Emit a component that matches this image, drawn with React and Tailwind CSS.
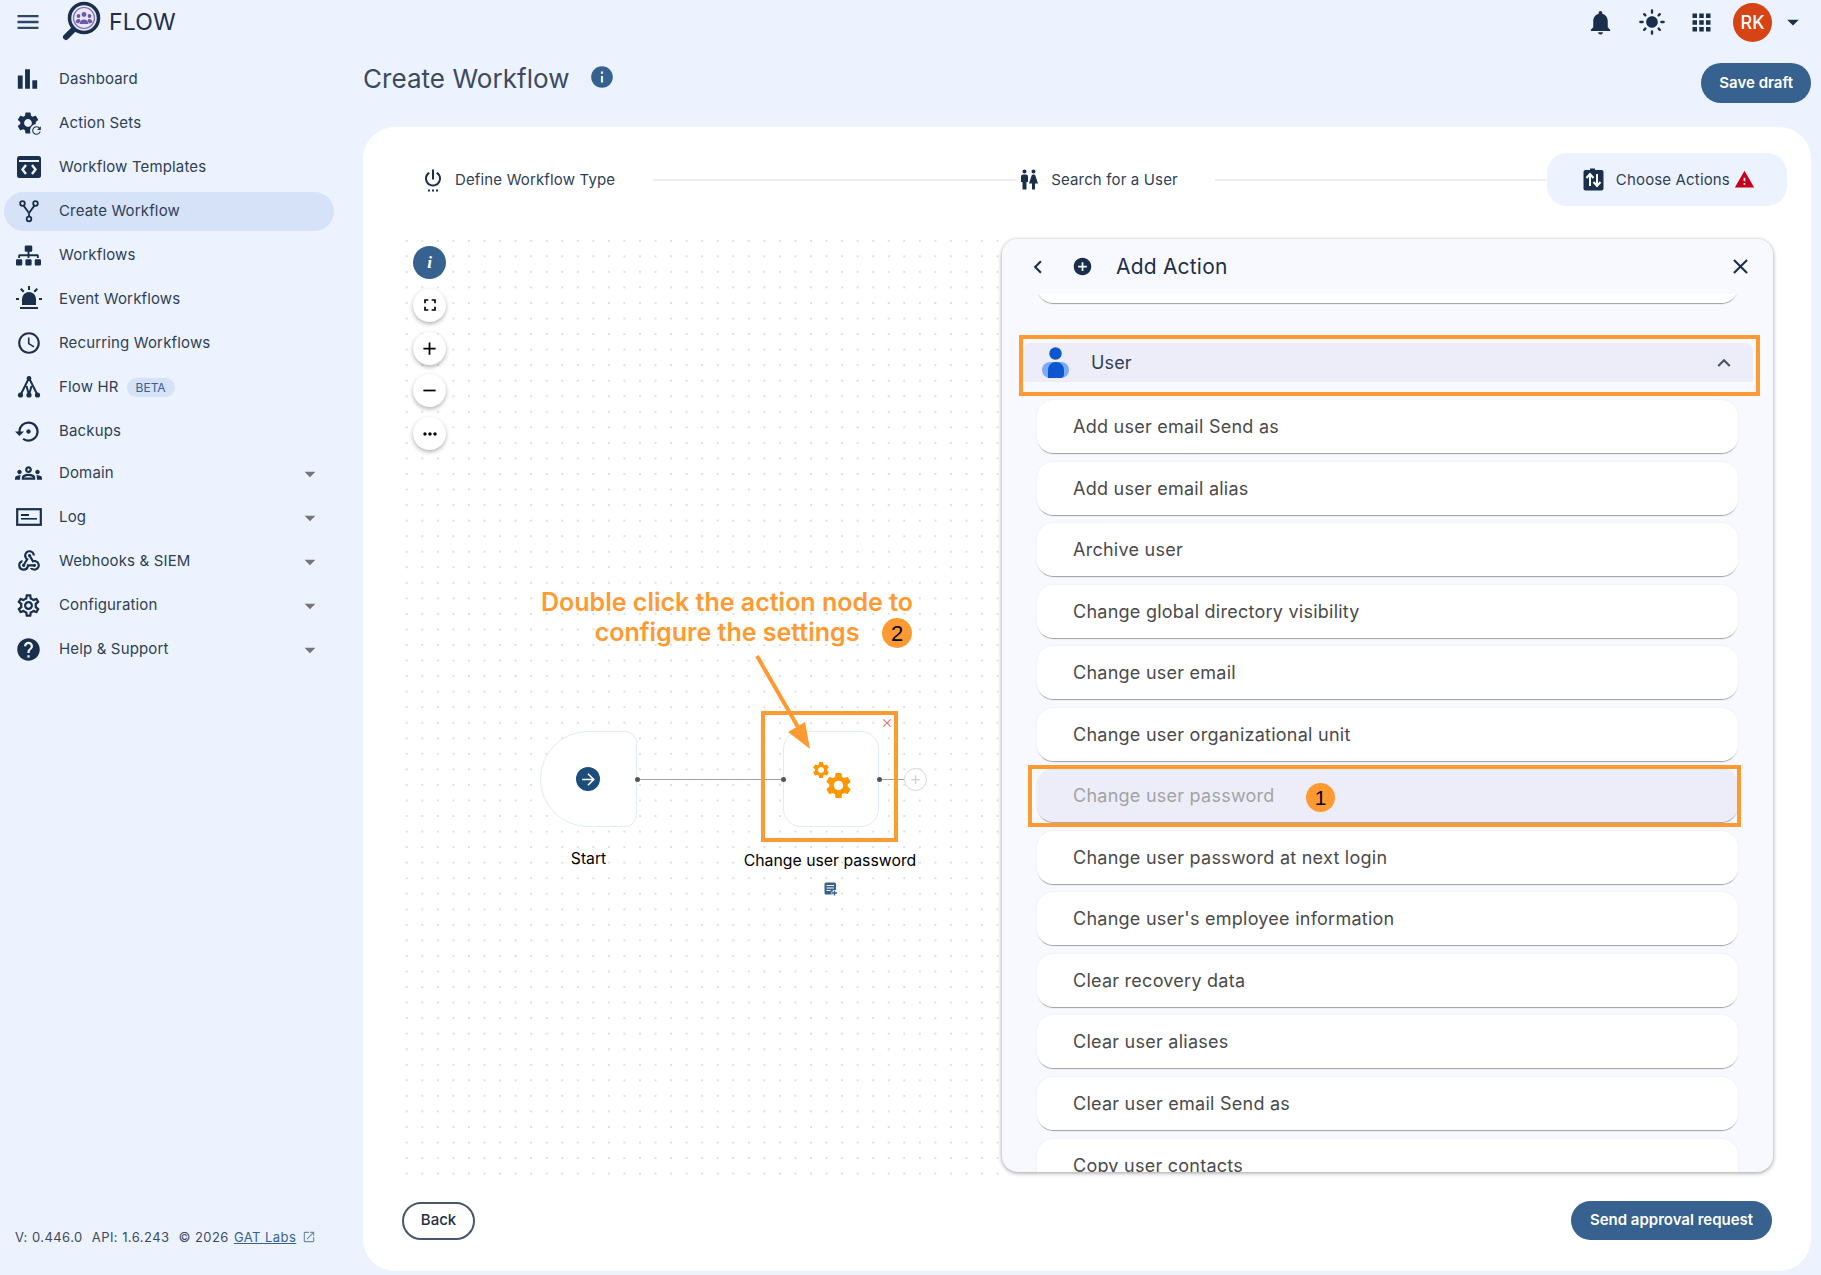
import {
  MdMenu, MdBarChart, MdSettings, MdRefresh, MdAccessTime, MdSettingsBackupRestore, MdOutlineGroups, MdOutlineWebhook,
  MdOutlineSettings, MdHelp, MdNotifications, MdLightMode, MdApps, MdArrowDropDown, MdSettingsPower, MdWc, MdWarning,
  MdInfo, MdFullscreen, MdAdd, MdRemove, MdMoreHoriz, MdChevronLeft, MdAddCircle, MdClose, MdExpandLess, MdArrowForward, MdOpenInNew,
} from 'react-icons/md'
import { FaSitemap } from 'react-icons/fa'

const INK = '#1a2f4b'

// ─── Hand drawn icons ─────────────────────────────────────────────
function Logo() {
  return (
    <svg width="40" height="42" viewBox="0 0 40 42" className="shrink-0">
      <path d="M14 27 L5 36" stroke={INK} strokeWidth="6" strokeLinecap="round" />
      <circle cx="23" cy="17" r="14.5" fill="#e9e7f6" stroke={INK} strokeWidth="3.5" />
      <circle cx="23" cy="17" r="10.5" fill="none" stroke="#7a6bb5" strokeWidth="1.2" />
      <circle cx="23" cy="13.5" r="2.4" fill="#6b5aa6" />
      <circle cx="17.5" cy="15" r="1.9" fill="#6b5aa6" />
      <circle cx="28.5" cy="15" r="1.9" fill="#6b5aa6" />
      <path d="M18.5 23 a4.5 4.5 0 0 1 9 0 z" fill="#6b5aa6" />
      <path d="M14.5 21.5 a3.5 3.5 0 0 1 4 -3.5 l1 2 -2 2.5 z M31.5 21.5 a3.5 3.5 0 0 0 -4 -3.5 l-1 2 2 2.5 z" fill="#6b5aa6" />
    </svg>
  )
}

function ActionSetsIcon() {
  return (
    <span className="relative block h-[26px] w-[26px]">
      <MdSettings size={26} color={INK} className="-ml-[1px]" />
      <span className="absolute -bottom-[1px] -right-[1px] flex h-[13px] w-[13px] items-center justify-center rounded-full bg-[#ecf3fe]">
        <MdRefresh size={13} color={INK} />
      </span>
    </span>
  )
}

function TemplatesIcon() {
  return (
    <svg width="26" height="24" viewBox="0 0 26 24">
      <rect x="1" y="1" width="24" height="22" rx="2.5" fill={INK} />
      <rect x="3" y="5" width="20" height="2" fill="#ecf3fe" />
      <path d="M10 10 L6.5 14.5 L10 19 M16 10 L19.5 14.5 L16 19" fill="none" stroke="#ecf3fe" strokeWidth="2.4" />
    </svg>
  )
}

function ForkIcon() {
  return (
    <svg width="24" height="24" viewBox="0 0 24 24" fill="none" stroke={INK} strokeWidth="1.8">
      <circle cx="5.5" cy="4.5" r="2.3" />
      <circle cx="18.5" cy="4.5" r="2.3" />
      <circle cx="12" cy="20" r="2.3" />
      <path d="M6.6 6.6 L12 14 L17.4 6.6 M12 14 V17.7" />
    </svg>
  )
}

function SirenIcon() {
  return (
    <svg width="26" height="26" viewBox="0 0 26 26" fill={INK}>
      <path d="M6 19 v-6 a7 7 0 0 1 14 0 v6 z" />
      <rect x="4" y="21" width="18" height="2" />
      <rect x="12" y="0" width="2" height="4" />
      <path d="M4 3.5 l1.5 -1.5 3 3 -1.5 1.5 z M22 3.5 l-1.5 -1.5 -3 3 1.5 1.5 z" />
      <rect x="0" y="12" width="3" height="2" />
      <rect x="23" y="12" width="3" height="2" />
    </svg>
  )
}

function FlowHrIcon() {
  return (
    <svg width="24" height="24" viewBox="0 0 24 24" fill={INK} stroke={INK}>
      <path d="M12 3 L3.5 20 M12 3 L20.5 20 M9.5 11 L12 20 M14.5 11 L12 20" fill="none" strokeWidth="2" />
      <circle cx="12" cy="3.5" r="2.4" strokeWidth="0" />
      <circle cx="3.5" cy="20" r="2.6" strokeWidth="0" />
      <circle cx="12" cy="20" r="2.6" strokeWidth="0" />
      <circle cx="20.5" cy="20" r="2.6" strokeWidth="0" />
    </svg>
  )
}

function LogIcon() {
  return (
    <svg width="26" height="18" viewBox="0 0 26 18">
      <rect x="1.2" y="1.2" width="23.6" height="15.6" fill="none" stroke={INK} strokeWidth="2.2" />
      <rect x="5" y="6" width="8" height="2" fill={INK} />
      <rect x="5" y="10" width="16" height="1.6" fill={INK} />
    </svg>
  )
}

function ChooseActionsIcon() {
  return (
    <svg width="21" height="23" viewBox="0 0 21 23">
      <rect x="0.5" y="2" width="20" height="20.5" rx="2" fill={INK} />
      <rect x="7" y="0.5" width="5" height="3" fill={INK} />
      <path d="M7 18 V7 M3.5 10 L7 6 L10.5 10" fill="none" stroke="#fff" strokeWidth="2" />
      <path d="M14 6 V17 M10.5 14 L14 18 L17.5 14" fill="none" stroke="#fff" strokeWidth="2" />
    </svg>
  )
}

function UserIcon() {
  return (
    <svg width="27" height="31" viewBox="0 0 27 31">
      <circle cx="13.5" cy="6.5" r="6.2" fill="#0b57d0" />
      <rect x="0" y="15" width="27" height="16" rx="8" fill="#7baaf7" />
      <path d="M6 31 V23 a8 8 0 0 1 8 -8 a8 8 0 0 1 8 8 V27 a4 4 0 0 1 -4 4 z" fill="#0b57d0" />
    </svg>
  )
}

function NoteAddIcon() {
  return (
    <svg width="14" height="14" viewBox="0 0 14 14">
      <rect x="0.5" y="0.5" width="11.5" height="12" rx="1.5" fill="#37618e" />
      <path d="M2.5 3.5 H10 M2.5 6 H10 M2.5 8.5 H6.5" stroke="#fff" strokeWidth="1" />
      <path d="M10.5 8 V14 M7.5 11 H13.5" stroke="#fff" strokeWidth="3.2" />
      <path d="M10.5 8.5 V13.5 M8 11 H13" stroke="#37618e" strokeWidth="1.4" />
    </svg>
  )
}

// ─── Data ─────────────────────────────────────────────────────────
const NAV = [
  { label: 'Dashboard', icon: <MdBarChart size={30} color={INK} className="-ml-[2px]" /> },
  { label: 'Action Sets', icon: <ActionSetsIcon /> },
  { label: 'Workflow Templates', icon: <TemplatesIcon /> },
  { label: 'Create Workflow', icon: <ForkIcon />, active: true },
  { label: 'Workflows', icon: <FaSitemap size={25} color={INK} /> },
  { label: 'Event Workflows', icon: <SirenIcon /> },
  { label: 'Recurring Workflows', icon: <MdAccessTime size={26} color={INK} /> },
  { label: 'Flow HR', icon: <FlowHrIcon />, beta: true },
  { label: 'Backups', icon: <MdSettingsBackupRestore size={27} color={INK} /> },
  { label: 'Domain', icon: <MdOutlineGroups size={30} color={INK} />, caret: true, up: true },
  { label: 'Log', icon: <LogIcon />, caret: true },
  { label: 'Webhooks & SIEM', icon: <MdOutlineWebhook size={26} color={INK} />, caret: true },
  { label: 'Configuration', icon: <MdOutlineSettings size={27} color={INK} />, caret: true },
  { label: 'Help & Support', icon: <MdHelp size={27} color={INK} />, caret: true },
]

const ACTIONS = [
  'Add user email Send as',
  'Add user email alias',
  'Archive user',
  'Change global directory visibility',
  'Change user email',
  'Change user organizational unit',
  'Change user password',
  'Change user password at next login',
  "Change user's employee information",
  'Clear recovery data',
  'Clear user aliases',
  'Clear user email Send as',
  'Copy user contacts',
]

const CARD = 'flex h-[53px] shrink-0 items-center rounded-2xl pl-[36px] text-[18px] tracking-[0.25px] shadow-[0_2px_1px_-1px_rgba(0,0,0,0.35),0_0_2px_rgba(0,0,0,0.08)]'
const FLOAT_BTN = 'flex h-[33px] w-[33px] items-center justify-center rounded-full bg-white text-black shadow-[0_2px_4px_rgba(0,0,0,0.3)]'

// ─── Sidebar ──────────────────────────────────────────────────────
function NavRow({ item }) {
  return (
    <div
      className={`ml-1 mr-[29px] my-[2.5px] flex h-[39px] items-center rounded-full pl-[11px] pr-[10px] ${item.active ? 'bg-[#d6e2f8]' : ''} ${item.up ? 'mt-[0.5px]' : ''}`}
    >
      <span className="flex w-[27px] shrink-0 items-center justify-center">{item.icon}</span>
      <span className="ml-[17px] text-[15px] tracking-[0.15px] text-[#2f3f55]">{item.label}</span>
      {item.beta && (
        <span className="ml-2 rounded-full bg-[#d6e2f8] px-[9px] py-[2px] text-[12px] leading-[15px] text-[#37618e]">BETA</span>
      )}
      {item.caret && <MdArrowDropDown size={26} color="#757575" className="ml-auto mr-[1px] mt-[2px]" />}
    </div>
  )
}

function Sidebar() {
  return (
    <aside className="flex w-[363px] shrink-0 flex-col pb-[28px] pt-[13px]">
      {NAV.map((item) => <NavRow key={item.label} item={item} />)}
      <div className="mt-auto flex items-center pl-[15px] text-[13px] tracking-[0.45px] text-[#3c4a5e]">
        <span>V: 0.446.0</span>
        <span className="ml-[9px]">API: 1.6.243</span>
        <span className="ml-[9px]">© 2026</span>
        <span className="ml-[5px] text-[#37618e] underline">GAT Labs</span>
        <MdOpenInNew size={14} color="#6d8db0" className="ml-[6px]" />
      </div>
    </aside>
  )
}

// ─── Canvas with the two nodes ────────────────────────────────────
function Canvas() {
  return (
    <div className="relative -mb-[3px] flex-1 bg-[radial-gradient(#c6c6c6_0.6px,transparent_0.8px)] bg-[size:15.55px_15.55px] bg-[position:-1px_-6px]">
      <div className="absolute left-[13px] top-[7px] flex flex-col gap-[9.8px]">
        <span className="flex h-[33px] w-[33px] items-center justify-center rounded-full bg-[#37618e] font-['Liberation_Serif',serif] text-[17px] font-bold italic text-white">i</span>
        <span className={FLOAT_BTN}><MdFullscreen size={20} /></span>
        <span className={FLOAT_BTN}><MdAdd size={21} /></span>
        <span className={FLOAT_BTN}><MdRemove size={21} /></span>
        <span className={FLOAT_BTN}><MdMoreHoriz size={20} /></span>
      </div>

      <div className="absolute left-[97px] top-[348px] w-[460px] text-center text-[25px] font-semibold leading-[30px] text-[#ff9a33]">
        Double click the action node to<br />configure the settings
      </div>
      <span className="absolute left-[482px] top-[379px] flex h-[30px] w-[30px] items-center justify-center rounded-full bg-[#ff9a33] font-['Liberation_Sans',sans-serif] text-[22px] text-black">2</span>

      {/* start node */}
      <div className="absolute left-[140px] top-[492px] flex h-[96px] w-[97px] items-center justify-center rounded-l-[48px] rounded-r-[12px] border border-[#e2eaf8] bg-white pr-[1px]">
        <span className="flex h-6 w-6 items-center justify-center rounded-full bg-[#1c4d7c]"><MdArrowForward size={19} color="#fff" /></span>
      </div>
      <span className="absolute left-[140px] top-[608px] w-[97px] text-center text-[15.7px] text-black">Start</span>

      {/* connectors */}
      <div className="absolute left-[237px] top-[540px] h-px w-[146px] bg-[#a3a3a3]" />
      <div className="absolute left-[479px] top-[540px] h-px w-[36px] bg-[#a3a3a3]" />

      {/* action node */}
      <div className="absolute left-[383px] top-[492px] h-[96px] w-[96px] rounded-[18px] border border-[#e2eaf8] bg-white">
        <MdSettings size={20} color="#ff9800" className="absolute left-[27px] top-[28px]" />
        <MdSettings size={31} color="#ff9800" className="absolute left-[39px] top-[38px]" />
      </div>
      <span className="absolute left-[235px] top-[538px] h-[5px] w-[5px] rounded-full bg-[#555]" />
      <span className="absolute left-[381px] top-[538px] h-[5px] w-[5px] rounded-full bg-[#555]" />
      <span className="absolute left-[477px] top-[538px] h-[5px] w-[5px] rounded-full bg-[#555]" />
      <span className="absolute left-[504px] top-[529px] flex h-[23px] w-[23px] items-center justify-center rounded-full border border-[#d8d8d8] bg-white"><MdAdd size={15} color="#cfcfcf" /></span>
      <MdClose size={14} color="#e57373" className="absolute left-[480px] top-[477px]" />
      <span className="absolute left-[320px] top-[610px] w-[220px] text-center text-[15.8px] text-black">Change user password</span>
      <span className="absolute left-[424px] top-[643px]"><NoteAddIcon /></span>

      {/* orange highlight and arrow */}
      <div className="absolute left-[361px] top-[472px] h-[131px] w-[137px] border-4 border-[#ff9a33]" />
      <svg className="absolute left-[350px] top-[410px]" width="70" height="110" viewBox="0 0 70 110">
        <path d="M7 7 L48 78" stroke="#ff9a33" strokeWidth="4" />
        <path d="M60 100 L38 83 L55 73 z" fill="#ff9a33" />
      </svg>
    </div>
  )
}

// ─── Right panel with the list of actions ─────────────────────────
function ActionPanel() {
  return (
    <div className="flex h-[933px] w-[771px] shrink-0 flex-col overflow-hidden rounded-2xl bg-[#f8f9fe] shadow-[0_1px_4px_rgba(0,0,0,0.4)]">
      <div className="z-10 flex h-[55px] shrink-0 items-center bg-[#f8f9fe] pl-[23px] pr-[20px]">
        <MdChevronLeft size={26} color={INK} />
        <MdAddCircle size={21} color={INK} className="ml-[21px]" />
        <span className="ml-[23px] text-[21px] tracking-[0.2px] text-[#1f2f45]">Add Action</span>
        <MdClose size={25} color={INK} className="ml-auto" />
      </div>

      <div className="flex flex-col overflow-hidden">
        <div className={`${CARD} mx-[35px] -mt-[44px] bg-white`} />

        <div className="relative mx-[20px] mb-[18px] mt-[40px] flex h-[39px] shrink-0 items-center rounded-t-lg bg-[#ecedf9] pl-[20px] pr-[16px]">
          <UserIcon />
          <span className="-mt-[1px] ml-[22px] text-[18px] tracking-[0.15px] text-[#2f3f55]">User</span>
          <MdExpandLess size={26} color="#4b5563" className="ml-auto" />
          <div className="absolute -bottom-[14px] -left-[3px] -right-[7px] -top-[8px] border-4 border-[#ff9a33]" />
        </div>

        <div className="mx-[35px] flex flex-col gap-[8.55px]">
          {ACTIONS.map((name) => {
            const picked = name === 'Change user password'
            return (
              <div key={name} className={`relative ${CARD} ${picked ? 'bg-[#ecedf9] text-[#a3a3a3]' : 'bg-white text-[#4a4a4a]'}`}>
                {name}
                {picked && (
                  <>
                    <span className="absolute left-[269px] top-[14px] flex h-[29px] w-[29px] items-center justify-center rounded-full bg-[#ff9a33] font-['Liberation_Sans',sans-serif] text-[21px] tracking-normal text-black">1</span>
                    <div className="absolute -bottom-[5px] -left-[9px] -right-[3px] -top-[4px] border-4 border-[#ff9a33]" />
                  </>
                )}
              </div>
            )
          })}
        </div>
      </div>
    </div>
  )
}

function Step({ icon, label }) {
  return (
    <div className="flex shrink-0 items-center">
      <span className="flex w-[24px] justify-center">{icon}</span>
      <span className="ml-[10px] mt-[2px] text-[15px] tracking-[0.15px] text-[#2f3f55]">{label}</span>
    </div>
  )
}

// ─── Page ─────────────────────────────────────────────────────────
export default function App() {
  return (
    <div className="flex h-[1275px] w-full flex-col overflow-hidden bg-[#ecf3fe] font-['Inter',sans-serif]">
      <header className="flex h-[44px] shrink-0 items-center pl-[14px] pr-[14px]">
        <MdMenu size={28} color="#2f4763" />
        <span className="ml-[19px]"><Logo /></span>
        <span className="ml-[8px] text-[23px] tracking-[0.2px] text-[#1f2f45]">FLOW</span>
        <div className="ml-auto flex items-center">
          <MdNotifications size={29} color={INK} />
          <MdLightMode size={28} color={INK} className="ml-[23px]" />
          <MdApps size={27} color={INK} className="ml-[22px]" />
          <span className="ml-[18px] flex h-[39px] w-[39px] items-center justify-center rounded-full bg-[#d84315] text-[18px] font-medium text-white">RK</span>
          <MdArrowDropDown size={28} color={INK} className="ml-[7px]" />
        </div>
      </header>

      <div className="flex min-h-0 flex-1">
        <Sidebar />

        <main className="flex min-w-0 flex-1 flex-col pb-[4px] pr-[10px]">
          <div className="flex h-[83px] shrink-0 items-start">
            <h1 className="mt-[17px] text-[26px] font-normal leading-[36px] tracking-[0.05px] text-[#3c4a5e]">Create Workflow</h1>
            <MdInfo size={26} color="#37618e" className="ml-[19px] mt-[20px]" />
            <button className="ml-auto mt-[19px] h-[40px] rounded-full bg-[#37618e] px-[18px] text-[15px] font-semibold text-white">Save draft</button>
          </div>

          <section className="flex min-h-0 flex-1 flex-col rounded-[32px] bg-white pt-[26px]">
            <div className="flex h-[53px] shrink-0 items-center pl-[58px] pr-[24px]">
              <Step icon={<MdSettingsPower size={27} color={INK} />} label="Define Workflow Type" />
              <div className="ml-[38px] h-[2px] w-[364px] bg-[#eeeeee]" />
              <Step icon={<MdWc size={29} color={INK} />} label="Search for a User" />
              <div className="ml-[37px] h-[2px] w-[332px] bg-[#eeeeee]" />
              <div className="flex h-[53px] flex-1 items-center rounded-[20px] bg-[#ecf3fe] pl-[36px]">
                <ChooseActionsIcon />
                <span className="ml-[12px] mt-[2px] text-[15px] tracking-[0.15px] text-[#2f3f55]">Choose Actions</span>
                <MdWarning size={21} color="#c4001d" className="ml-[4px]" />
              </div>
            </div>

            <div className="mt-[33px] flex h-[933px] shrink-0 pl-[37px] pr-[38px]">
              <Canvas />
              <ActionPanel />
            </div>

            <div className="mt-[29px] flex items-center justify-between pl-[39px] pr-[39px]">
              <button className="h-[38px] w-[73px] rounded-full border-2 border-[#47566b] text-[15px] font-medium text-[#1f2f45]">Back</button>
              <button className="h-[39px] w-[201px] rounded-full bg-[#37618e] text-[15px] font-semibold text-white">Send approval request</button>
            </div>
          </section>
        </main>
      </div>
    </div>
  )
}
